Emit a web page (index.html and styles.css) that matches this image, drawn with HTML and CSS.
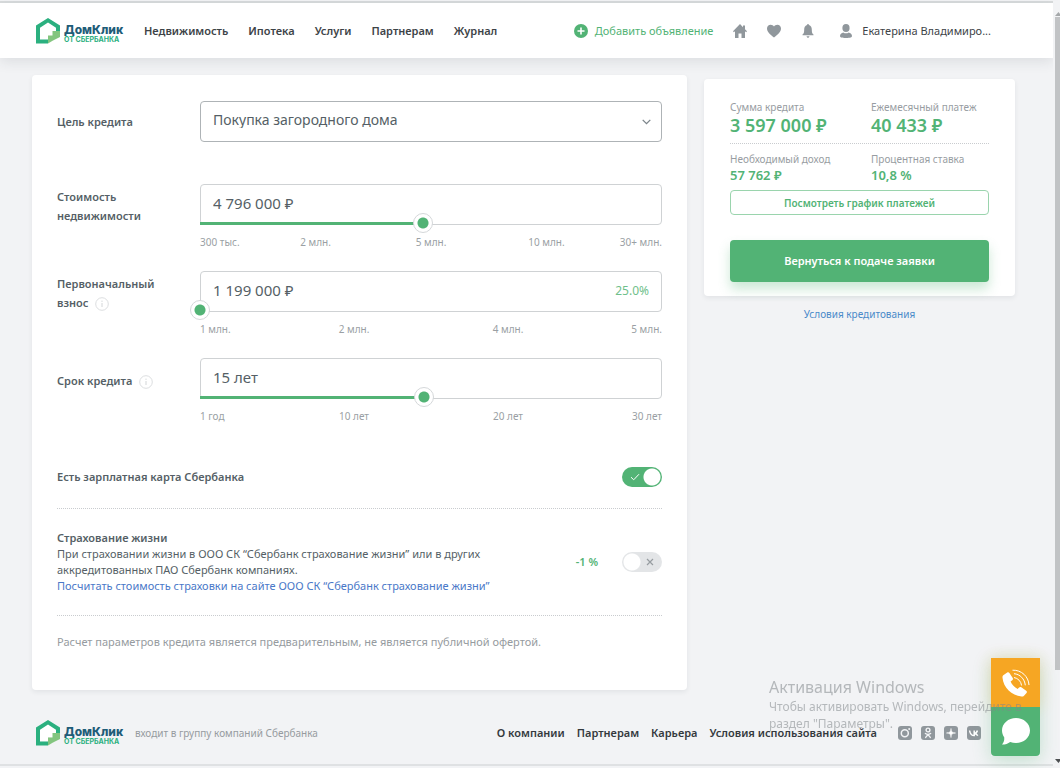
FILE: index.html
```html
<!DOCTYPE html>
<html lang="ru">
<head>
<meta charset="utf-8">
<meta name="viewport" content="width=device-width, initial-scale=1">
<title>ДомКлик — ипотечный калькулятор</title>
<link rel="stylesheet" href="styles.css">
</head>
<body>
<svg class="sprite" aria-hidden="true">
  <symbol id="logo" viewBox="0 0 24 26">
    <path d="M4 9.700 12 4.600l8 5.100V17h-8v4.500H4z" fill="#fff"/>
    <path d="M0 25.500V7.500L12 0l12 7.500V13h-4V9.700L12 4.600 4 9.700v11.800h8v4z" fill="#2bb07f"/>
    <path d="M24 13v6L17 22.500 12 25.500V17.500h4.500V13z" fill="#83c57f"/>
  </symbol>
  <symbol id="info" viewBox="0 0 14 14">
    <circle cx="7" cy="7" r="6.300" fill="none" stroke="#dcdee0"/>
    <path d="M7 6v4M7 3.600v1.300" stroke="#d3d6d8" fill="none"/>
  </symbol>
</svg>
<div class="page">
  <header class="header">
    <a class="logo" href="#">
      <svg class="logo-mark" viewBox="0 0 24 26" aria-hidden="true"><use href="#logo"/></svg>
      <span class="logo-text"><b class="logo-name">ДомКлик</b><small class="logo-sub">ОТ СБЕРБАНКА</small></span>
    </a>
    <nav class="nav">
      <a href="#">Недвижимость</a><a href="#">Ипотека</a><a href="#">Услуги</a><a href="#">Партнерам</a><a href="#">Журнал</a>
    </nav>
    <div class="account">
      <a class="add" href="#">
        <svg width="14" height="14" viewBox="0 0 14 14" aria-hidden="true"><circle cx="7" cy="7" r="7" fill="#52b375"/><path d="M7 3.500v7M3.500 7h7" stroke="#fff" stroke-width="1.600"/></svg>
        Добавить объявление
      </a>
      <a class="icon-link" href="#" aria-label="Дом"><svg width="14" height="14" viewBox="0 0 14 14"><path d="M7 0 0 7.200l.9 1L2 7.300V14h3.500V9.500h3V14H12V7.300l1.100.9.900-1-2-2V1.500h-2v1.700z" fill="#90979c"/></svg></a>
      <a class="icon-link" href="#" aria-label="Избранное"><svg width="14" height="14" viewBox="0 0 14 14"><path d="M7 13.500C4.500 11.800 0 8.500 0 4.600 0 2.200 1.700.8 3.600.8 5.200.8 6.300 1.600 7 2.500 7.700 1.600 8.800.8 10.400.8 12.300.8 14 2.200 14 4.600c0 3.900-4.500 7.200-7 8.900z" fill="#90979c"/></svg></a>
      <a class="icon-link" href="#" aria-label="Уведомления"><svg width="14" height="14" viewBox="0 0 14 14"><path d="M7 0c.6 0 .9.400 1 1 2 .7 2.800 2.400 2.800 4.500 0 2.800.3 4 1.700 5v.7h-11v-.7c1.400-1 1.700-2.200 1.700-5C3.200 3.400 4 1.700 6 1c.1-.6.400-1 1-1zM5.500 12.300h3c-.2.900-.7 1.500-1.500 1.500s-1.300-.6-1.500-1.500z" fill="#90979c"/></svg></a>
      <a class="user" href="#">
        <svg width="12" height="14" viewBox="0 0 12 14" aria-hidden="true"><ellipse cx="6" cy="4" rx="3.600" ry="4" fill="#90979c"/><path d="M0 12c0-2 1.500-3.300 3.300-3.600 1.600 1.200 3.800 1.200 5.400 0C10.500 8.700 12 10 12 12c0 1.300-1.500 2-6 2s-6-.7-6-2z" fill="#90979c"/></svg>
        Екатерина Владимиро...
      </a>
    </div>
  </header>

  <main class="main">
    <form class="card form">
      <div class="field field-goal">
        <label class="label" for="goal">Цель кредита</label>
        <div class="select-wrap">
          <select class="box select" id="goal"><option>Покупка загородного дома</option></select>
          <svg class="chevron" width="9" height="6" viewBox="0 0 9 6" aria-hidden="true"><path d="M.7.900 4.500 4.600 8.300.900" fill="none" stroke="#7b848a" stroke-width="1.300"/></svg>
        </div>
      </div>
      <div class="field">
        <label class="label" for="price">Стоимость недвижимости</label>
        <div class="control">
          <input class="box" id="price" type="text" value="4 796 000 ₽">
          <input class="range" type="range" min="0" max="1000" value="482" style="--fill:.482" aria-label="Стоимость недвижимости">
          <div class="scale five"><span>300 тыс.</span><span>2 млн.</span><span>5 млн.</span><span>10 млн.</span><span>30+ млн.</span></div>
        </div>
      </div>
      <div class="field">
        <label class="label" for="down">Первоначальный взнос <svg class="info" width="14" height="14" aria-hidden="true"><use href="#info"/></svg></label>
        <div class="control">
          <input class="box" id="down" type="text" value="1 199 000 ₽">
          <output class="percent" for="down">25.0%</output>
          <input class="range" type="range" min="0" max="1000" value="0" style="--fill:0" aria-label="Первоначальный взнос">
          <div class="scale four"><span>1 млн.</span><span>2 млн.</span><span>4 млн.</span><span>5 млн.</span></div>
        </div>
      </div>
      <div class="field field-term">
        <label class="label" for="term">Срок кредита <svg class="info" width="14" height="14" aria-hidden="true"><use href="#info"/></svg></label>
        <div class="control">
          <input class="box" id="term" type="text" value="15 лет">
          <input class="range" type="range" min="0" max="1000" value="484" style="--fill:.484" aria-label="Срок кредита">
          <div class="scale four"><span>1 год</span><span>10 лет</span><span>20 лет</span><span>30 лет</span></div>
        </div>
      </div>

      <div class="option option-card">
        <label class="strong" for="salary">Есть зарплатная карта Сбербанка</label>
        <span class="toggle">
          <input id="salary" type="checkbox" checked>
          <svg class="toggle-on" width="10" height="8" viewBox="0 0 10 8" aria-hidden="true"><path d="M1 4.200 3.700 6.800 9 1.200" fill="none" stroke="#fff"/></svg>
        </span>
      </div>
      <div class="option option-life">
        <div class="option-text">
          <label class="strong" for="life">Страхование жизни</label>
          <p>При страховании жизни в ООО СК “Сбербанк страхование жизни” или в других аккредитованных ПАО Сбербанк компаниях.</p>
          <a href="#">Посчитать стоимость страховки на сайте ООО СК “Сбербанк страхование жизни”</a>
        </div>
        <span class="discount">-1 %</span>
        <span class="toggle">
          <input id="life" type="checkbox">
          <svg class="toggle-off" width="8" height="8" viewBox="0 0 8 8" aria-hidden="true"><path d="m1 1 6 6M7 1 1 7" stroke="#979da1" stroke-width="1.200"/></svg>
        </span>
      </div>
      <p class="note">Расчет параметров кредита является предварительным, не является публичной офертой.</p>
    </form>

    <aside class="side">
      <section class="card summary">
        <dl class="totals totals-big">
          <div><dt>Сумма кредита</dt><dd>3 597 000 ₽</dd></div>
          <div><dt>Ежемесячный платеж</dt><dd>40 433 ₽</dd></div>
        </dl>
        <dl class="totals">
          <div><dt>Необходимый доход</dt><dd>57 762 ₽</dd></div>
          <div><dt>Процентная ставка</dt><dd>10,8 %</dd></div>
        </dl>
        <button class="btn btn-outline" type="button">Посмотреть график платежей</button>
        <button class="btn btn-primary" type="button">Вернуться к подаче заявки</button>
      </section>
      <a class="terms" href="#">Условия кредитования</a>
    </aside>
  </main>

  <footer class="footer">
    <a class="logo" href="#">
      <svg class="logo-mark" viewBox="0 0 24 26" aria-hidden="true"><use href="#logo"/></svg>
      <span class="logo-text"><b class="logo-name">ДомКлик</b><small class="logo-sub">ОТ СБЕРБАНКА</small></span>
    </a>
    <span class="group">входит в группу компаний Сбербанка</span>
    <nav class="footer-nav"><a href="#">О компании</a><a href="#">Партнерам</a><a href="#">Карьера</a><a href="#">Условия использования сайта</a></nav>
    <div class="social">
      <a href="#" aria-label="Instagram"><svg width="14" height="14" viewBox="0 0 14 14"><rect width="14" height="14" rx="3" fill="#90979c"/><circle cx="6.800" cy="7.300" r="3.500" fill="none" stroke="#f2f3f5" stroke-width="1.500"/><circle cx="11.200" cy="2.900" r="1" fill="#f2f3f5"/></svg></a>
      <a href="#" aria-label="Одноклассники"><svg width="14" height="14" viewBox="0 0 14 14"><rect width="14" height="14" rx="3" fill="#90979c"/><g fill="none" stroke="#f2f3f5" stroke-width="1.400" stroke-linecap="round"><circle cx="7" cy="4" r="1.900"/><path d="M4.400 7.500c1.600 1.200 3.600 1.200 5.200 0M7 8.600 4.700 11.400M7 8.600l2.300 2.800"/></g></svg></a>
      <a href="#" aria-label="Дзен"><svg width="14" height="14" viewBox="0 0 14 14"><rect width="14" height="14" rx="3" fill="#90979c"/><path d="M7 2.500C7.200 5.800 8 6.700 11.500 7 8 7.300 7.200 8.200 7 11.500 6.800 8.200 6 7.300 2.500 7 6 6.700 6.800 5.800 7 2.500z" fill="#fff" stroke="#fff" stroke-width=".6"/></svg></a>
      <a href="#" aria-label="ВКонтакте"><svg width="14" height="14" viewBox="0 0 14 14"><rect width="14" height="14" rx="3" fill="#90979c"/><path d="M2.600 4.500c.4 2.800 2 5.100 4.600 5.100V4.500M7.200 7.500c1.600-.2 2.800-1.400 3.200-3M7.200 7.200c1.600.2 3 1.200 3.500 2.500" fill="none" stroke="#fff" stroke-width="1.500"/></svg></a>
    </div>
  </footer>
</div>

<div class="scrollbar" aria-hidden="true">
  <svg width="7" height="6" viewBox="0 0 7 6"><path d="M2 6 5.500 2 7 4v2z" fill="#a5a8aa"/></svg>
  <div class="scroll-track"><div class="scroll-thumb"></div></div>
  <svg width="7" height="6" viewBox="0 0 7 6"><path d="M2 0h5v2L5.500 4z" fill="#4c4f51"/></svg>
</div>

<div class="contact">
  <button class="contact-btn call" type="button" aria-label="Позвонить"><svg width="28" height="28" viewBox="0 0 28 28"><path d="M1.300 6.200 5.200 3.600c.8-.5 1.700-.3 2.200.5l3.300 5c.5.700.3 1.700-.4 2.200l-1.700 1.300c1.200 3 4 6 7 7.400l1.500-1.500c.6-.6 1.500-.7 2.200-.2l4.900 3.400c.8.600.9 1.600.3 2.300l-2.500 2.700c-.7.700-1.500.9-2.500.8C9.800 26.500 1.300 18.600.5 8.700c-.1-1.200.1-1.900.8-2.500z" fill="#fff"/><path d="M12 8.500c4 .7 7 3.800 7.600 8M12 4.700c6 .4 10.700 5.300 11.300 11.600M10.500 1.200C19.500.8 26.500 7.500 27 16" fill="none" stroke="#fff" stroke-width="1"/></svg></button>
  <button class="contact-btn chat" type="button" aria-label="Чат"><svg width="28" height="27" viewBox="0 0 28 27"><path d="M14 0c7.700 0 14 5.500 14 12.500S21.700 25 14 25c-2 0-4-.4-5.800-1.100C6 25.500 3.500 26.500 0 26.500 2 24.500 2.500 22 2.200 19.300.8 17.300 0 15 0 12.500 0 5.500 6.300 0 14 0z" fill="#fff"/></svg></button>
</div>
<div class="watermark"><p class="watermark-title">Активация Windows</p><p>Чтобы активировать Windows, перейдите в раздел "Параметры".</p></div>
</body>
</html>
```
FILE: styles.css
```css
* { box-sizing: border-box; }
body {
  margin: 0;
  padding: 1px 0 2px;
  min-height: 100vh;
  display: grid;
  grid-template-columns: minmax(0, 1fr) 7px;
  background: #f2f3f5;
  color: #555f66;
  font: 11px/16px "Noto Sans", "Open Sans", sans-serif;
}
a { color: inherit; text-decoration: none; }
p, dl, dd { margin: 0; }
button, input, select { font: inherit; color: inherit; }
svg { flex: none; }
.sprite { position: absolute; width: 0; height: 0; }

.page {
  display: flex;
  flex-direction: column;
  border-top: 2px solid #d8dbdc;
  border-bottom: 2px solid #dfe1e3;
}

.header {
  display: flex;
  align-items: center;
  height: 55px;
  padding: 0 62px 0 36px;
  background: #fff;
  box-shadow: 0 4px 12px rgba(40, 50, 60, .1);
  color: #3d4347;
}
.logo { display: flex; gap: 4px; align-items: flex-end; font-family: Inter, sans-serif; }
.logo-mark { width: 24px; height: 26px; }
.logo-text { display: flex; flex-direction: column; width: 60px; }
.logo-name { color: #1f5d78; font-size: 12px; line-height: 13px; font-weight: 800; }
.logo-sub { color: #2bb07f; font-size: 7px; line-height: 8px; font-weight: 700; }
.nav { display: flex; gap: 20px; margin-left: 20px; font-weight: 600; }
.account { display: flex; align-items: center; margin-left: auto; gap: 20px; }
.account a { display: flex; align-items: center; }
.add { gap: 7px; color: #52b375; }
.user { gap: 10px; margin-left: 5px; }

.main {
  display: grid;
  grid-template-columns: minmax(0, 1fr) 311px;
  align-items: start;
  gap: 17px;
  padding: 17px 38px 0 32px;
}
.card {
  background: #fff;
  border-radius: 4px;
  box-shadow: 0 2px 5px rgba(40, 50, 60, .08);
}
.form { padding: 26px 25px 40px; }
.field { display: grid; grid-template-columns: 143px minmax(0, 1fr); margin-bottom: 21px; }
.field-goal { margin-bottom: 42px; }
.label {
  align-self: start;
  display: block;
  padding: 3px 20px 0 0;
  font-size: 11px;
  line-height: 19px;
  font-weight: 600;
}
.field-goal .label { padding-top: 11px; }
.field-term .label { padding-top: 13px; }
.info { margin-left: 4px; vertical-align: -4px; }
.control, .select-wrap, .toggle { position: relative; }
.box {
  display: block;
  width: 100%;
  height: 41px;
  padding: 0 12px 3px;
  border: 1px solid #cfd2d4;
  border-radius: 4px;
  background: #fff;
  outline: 0;
  font-size: 15px;
}
.select { appearance: none; border-color: #aeb3b6; font-size: 14px; }
.chevron { position: absolute; right: 11px; top: 18px; pointer-events: none; }
.percent { position: absolute; right: 13px; top: 12px; color: #6fbf8b; font-size: 12px; }
.range {
  position: absolute;
  left: -10px;
  top: 29px;
  width: calc(100% + 20px);
  height: 20px;
  margin: 0;
  appearance: none;
  background: linear-gradient(#52b375, #52b375) 10px center / calc((100% - 20px) * var(--fill)) 3px no-repeat;
}
.range::-webkit-slider-thumb {
  appearance: none;
  width: 20px;
  height: 20px;
  border: 1px solid #d5d8da;
  border-radius: 50%;
  background: radial-gradient(circle, #52b375 5px, #fff 6px);
}
.scale { display: grid; padding-top: 9px; color: #9a9fa4; font-size: 10px; text-align: center; white-space: nowrap; }
.five { grid-template-columns: 1fr 2fr 2fr 2fr 1fr; }
.four { grid-template-columns: 1fr 2fr 2fr 1fr; }
.scale span:first-child { text-align: left; }
.scale span:last-child { text-align: right; }

.option { display: flex; align-items: center; border-bottom: 1px dotted #c9cccf; }
.option-card { justify-content: space-between; padding: 22px 0 21px; }
.option-life { padding: 21px 0; }
.strong { font-weight: 600; }
.option-text { flex: 1; max-width: 460px; margin-right: auto; }
.option-text a { color: #4a78c8; }
.discount { margin-right: 24px; color: #52b375; font-weight: 600; }
.toggle { display: flex; }
.toggle input {
  appearance: none;
  width: 40px;
  height: 20px;
  margin: 0;
  border-radius: 10px;
  background: radial-gradient(circle at 10px 10px, #fff 8px, #e3e5e7 9px);
}
.toggle input:checked { background: radial-gradient(circle at 30px 10px, #fff 8px, #52b375 9px); }
.toggle-on, .toggle-off { position: absolute; pointer-events: none; top: 6px; }
.toggle-on { left: 8px; }
.toggle-off { right: 8px; }
.note { padding-top: 18px; color: #969ba0; }

.side { display: flex; flex-direction: column; padding-top: 4px; }
.summary { padding: 20px 26px 14px; }
.totals { display: grid; grid-template-columns: 141px minmax(0, 1fr); padding-bottom: 7px; }
.totals dt { color: #989da2; font-size: 10px; line-height: 16px; }
.totals dd { color: #52b375; font-size: 13px; line-height: 16px; font-weight: 600; }
.totals-big { margin-bottom: 7px; border-bottom: 1px dotted #c9cccf; padding-bottom: 8px; }
.totals-big dd { font-size: 18px; line-height: 20px; }
.btn { display: block; width: 100%; border-radius: 4px; font-weight: 600; }
.btn-outline { height: 25px; border: 1px solid #9ad4ad; background: #fff; color: #52b375; font-size: 10px; }
.btn-primary {
  height: 42px;
  margin-top: 25px;
  border: 0;
  background: #52b375;
  box-shadow: 0 7px 12px rgba(82, 179, 117, .3);
  color: #fff;
  font-size: 11px;
}
.terms { margin-top: 10px; color: #4a8ac9; font-size: 10px; text-align: center; }

.footer { display: flex; align-items: center; margin-top: auto; padding: 0 72px 18px 36px; }
.group { margin-left: 11px; color: #969ba0; font-size: 10px; }
.footer-nav { display: flex; gap: 12px; margin-left: auto; color: #34393d; font-weight: 600; }
.social { display: flex; gap: 9px; margin-left: 21px; }
.social a { display: flex; }

.scrollbar { display: flex; flex-direction: column; padding: 9px 0 1px; background: #f2f3f5; }
.scroll-track { flex: 1; padding: 1px 0 0 2px; }
.scroll-thumb { height: 88%; background: #c1c3c5; }

.contact {
  position: fixed;
  right: 20px;
  bottom: 12px;
  display: flex;
  flex-direction: column;
  box-shadow: 0 4px 18px rgba(82, 179, 117, .3);
}
.contact-btn { display: grid; place-items: center; width: 49px; height: 49px; padding: 0; border: 0; }
.call { background: #f6a623; box-shadow: 0 0 14px rgba(246, 166, 35, .22); }
.chat { position: relative; border-radius: 0 0 4px 4px; background: #52b375; }
.watermark {
  position: fixed;
  right: 20px;
  bottom: 36px;
  width: 271px;
  color: rgba(130, 135, 138, .55);
  font-size: 12px;
  line-height: 17px;
  pointer-events: none;
}
.watermark-title { font-size: 16px; line-height: 21px; }
```
